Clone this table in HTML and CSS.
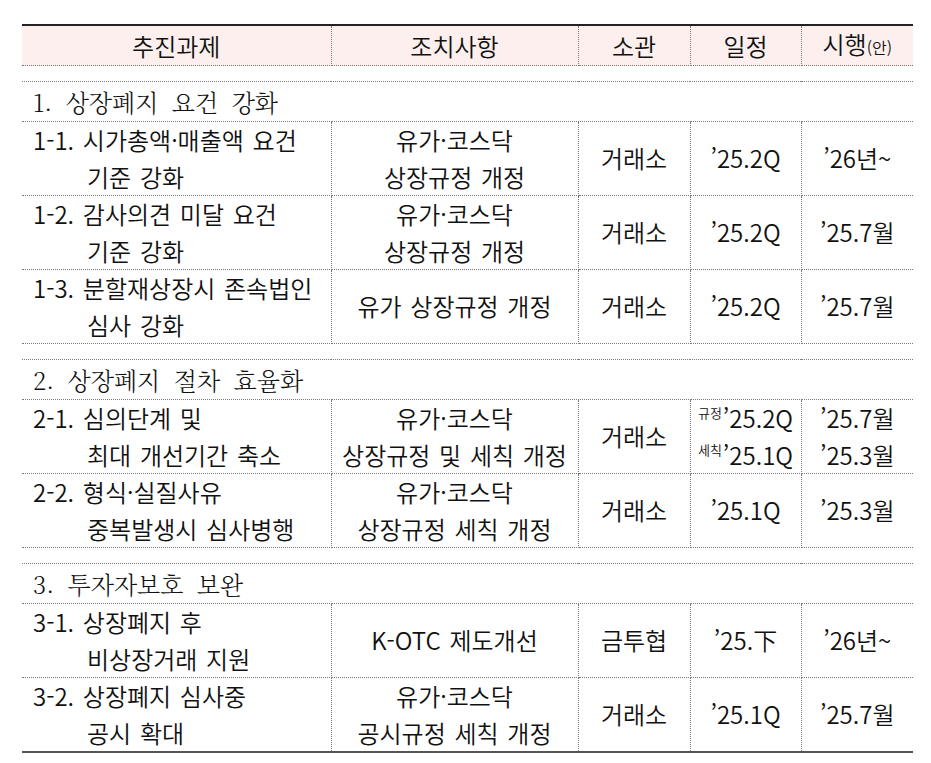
FILE: index.html
```html
<!DOCTYPE html>
<html lang="ko">
<head>
<meta charset="utf-8">
<title>상장폐지 제도 개선 추진과제</title>
<link rel="stylesheet" href="styles.css">
</head>
<body>
<table class="plan">
  <colgroup>
    <col class="c1"><col class="c2"><col class="c3"><col class="c4"><col class="c5">
  </colgroup>
  <thead>
    <tr><th>추진과제</th><th>조치사항</th><th>소관</th><th>일정</th><th>시행<span class="small">(안)</span></th></tr>
  </thead>
  <tbody>
    <tr class="gap"><td colspan="5"></td></tr>
    <tr class="section"><td colspan="5">1. 상장폐지 요건 강화</td></tr>
    <tr class="item">
      <td class="task"><div>1-1. 시가총액·매출액 요건</div><div class="indent">기준 강화</div></td>
      <td>유가·코스닥<br>상장규정 개정</td><td>거래소</td><td>’25.2Q</td><td>’26년~</td>
    </tr>
    <tr class="item">
      <td class="task"><div>1-2. 감사의견 미달 요건</div><div class="indent">기준 강화</div></td>
      <td>유가·코스닥<br>상장규정 개정</td><td>거래소</td><td>’25.2Q</td><td>’25.7월</td>
    </tr>
    <tr class="item">
      <td class="task"><div>1-3. 분할재상장시 존속법인</div><div class="indent">심사 강화</div></td>
      <td>유가 상장규정 개정</td><td>거래소</td><td>’25.2Q</td><td>’25.7월</td>
    </tr>
    <tr class="gap"><td colspan="5"></td></tr>
    <tr class="section"><td colspan="5">2. 상장폐지 절차 효율화</td></tr>
    <tr class="item">
      <td class="task"><div>2-1. 심의단계 및</div><div class="indent">최대 개선기간 축소</div></td>
      <td>유가·코스닥<br>상장규정 및 세칙 개정</td><td>거래소</td>
      <td><sup class="tag">규정</sup>’25.2Q<br><sup class="tag">세칙</sup>’25.1Q</td>
      <td>’25.7월<br>’25.3월</td>
    </tr>
    <tr class="item">
      <td class="task"><div>2-2. 형식·실질사유</div><div class="indent">중복발생시 심사병행</div></td>
      <td>유가·코스닥<br>상장규정 세칙 개정</td><td>거래소</td><td>’25.1Q</td><td>’25.3월</td>
    </tr>
    <tr class="gap"><td colspan="5"></td></tr>
    <tr class="section"><td colspan="5">3. 투자자보호 보완</td></tr>
    <tr class="item">
      <td class="task"><div>3-1. 상장폐지 후</div><div class="indent">비상장거래 지원</div></td>
      <td>K-OTC 제도개선</td><td>금투협</td><td>’25.下</td><td>’26년~</td>
    </tr>
    <tr class="item">
      <td class="task"><div>3-2. 상장폐지 심사중</div><div class="indent">공시 확대</div></td>
      <td>유가·코스닥<br>공시규정 세칙 개정</td><td>거래소</td><td>’25.1Q</td><td>’25.7월</td>
    </tr>
  </tbody>
</table>
</body>
</html>
```

FILE: styles.css
```css
html, body {
  margin: 0;
  padding: 0;
  background: #ffffff;
}

body {
  padding: 24px 0 0 22px;
  font-family: "Noto Sans CJK KR", "Noto Sans", sans-serif;
  color: #111111;
}

.plan {
  width: 891px;
  border-collapse: collapse;
  table-layout: fixed;
  border-top: 2px solid #222222;
  border-bottom: 2px solid #555555;
  font-size: 24px;
  font-weight: 350;
}

.c1 { width: 309px; }
.c2 { width: 247px; }
.c3 { width: 112px; }
.c4 { width: 111px; }
.c5 { width: 112px; }

.plan th,
.plan td {
  border: 1px dotted #7a7a7a;
  padding: 0;
  text-align: center;
  vertical-align: middle;
  font-weight: 350;
  word-spacing: 2px;
}

.plan th:first-child,
.plan td:first-child {
  border-left: none;
}

.plan th:last-child,
.plan td:last-child {
  border-right: none;
}

.plan thead th {
  background: #fcefed;
  height: 35px;
  line-height: 35px;
}

.small {
  font-size: 16px;
}

.gap td {
  height: 15px;
  font-size: 0;
  line-height: 0;
  border-left: none;
  border-right: none;
}

.section td {
  height: 39px;
  line-height: 39px;
  text-align: left;
  padding-left: 11px;
  font-family: "Noto Serif CJK KR", "Liberation Serif", "Noto Sans CJK KR", serif;
  font-weight: 300;
  word-spacing: 6px;
}

.item td {
  height: 73px;
  line-height: 36.5px;
}

.item td.task {
  text-align: left;
  padding-left: 11px;
}

.indent {
  padding-left: 54px;
}

.tag {
  font-size: 13px;
  line-height: 0;
  vertical-align: 10px;
  margin-right: 1px;
}
```
